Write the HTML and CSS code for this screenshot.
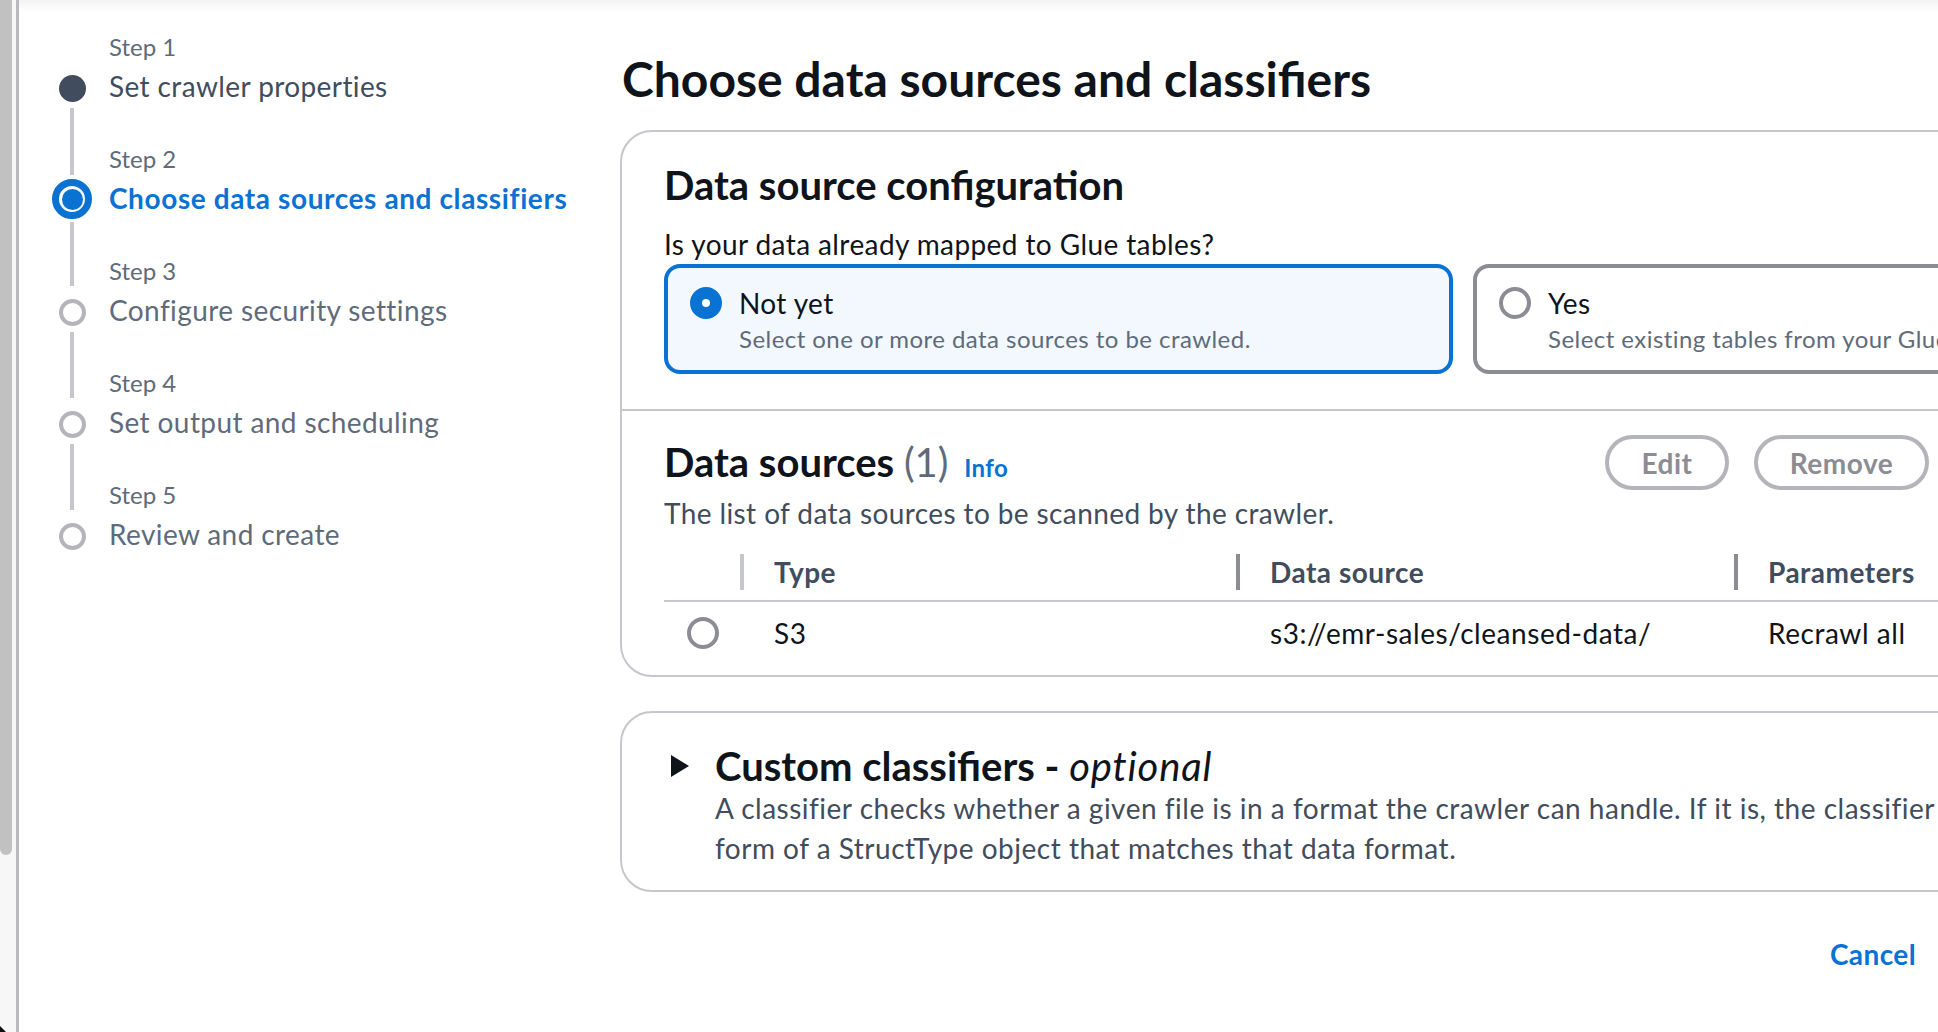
FILE: index.html
```html
<!DOCTYPE html>
<html lang="en">
<head>
<meta charset="utf-8">
<title>Add crawler - Choose data sources and classifiers</title>
<link rel="stylesheet" href="styles.css">
</head>
<body>
<div class="frame">
  <div class="scrolltrack">
    <div class="thumb"></div>
    <div class="corner"></div>
  </div>
  <div class="edge"></div>
  <div class="page">
    <nav class="steps">
      <ol class="step-list">
        <li class="step step-done step-first">
          <span class="seg seg-top"></span>
          <span class="step-label">Step 1</span>
          <span class="dot dot-done"></span>
          <span class="step-title">Set crawler properties</span>
          <span class="seg seg-bottom"></span>
        </li>
        <li class="step step-active">
          <span class="seg seg-top"></span>
          <span class="step-label">Step 2</span>
          <span class="dot dot-active"></span>
          <span class="step-title">Choose data sources and classifiers</span>
          <span class="seg seg-bottom"></span>
        </li>
        <li class="step">
          <span class="seg seg-top"></span>
          <span class="step-label">Step 3</span>
          <span class="dot dot-todo"></span>
          <span class="step-title">Configure security settings</span>
          <span class="seg seg-bottom"></span>
        </li>
        <li class="step">
          <span class="seg seg-top"></span>
          <span class="step-label">Step 4</span>
          <span class="dot dot-todo"></span>
          <span class="step-title">Set output and scheduling</span>
          <span class="seg seg-bottom"></span>
        </li>
        <li class="step step-last">
          <span class="seg seg-top"></span>
          <span class="step-label">Step 5</span>
          <span class="dot dot-todo"></span>
          <span class="step-title">Review and create</span>
          <span class="seg seg-bottom"></span>
        </li>
      </ol>
    </nav>

    <main class="content">
      <h1 class="page-title">Choose data sources and classifiers</h1>

      <section class="container">
        <div class="section section-config">
          <h2 class="h2">Data source configuration</h2>
          <p class="question">Is your data already mapped to Glue tables?</p>
          <div class="tiles">
            <label class="tile tile-selected">
              <span class="radio radio-on"></span>
              <span class="tile-text">
                <span class="tile-title">Not yet</span>
                <span class="tile-desc">Select one or more data sources to be crawled.</span>
              </span>
            </label>
            <label class="tile">
              <span class="radio"></span>
              <span class="tile-text">
                <span class="tile-title">Yes</span>
                <span class="tile-desc">Select existing tables from your Glue Data Catalog.</span>
              </span>
            </label>
          </div>
        </div>

        <div class="section section-sources">
          <div class="table-header">
            <h2 class="h2 h2-table">Data sources <span class="counter">(1)</span> <a class="info">Info</a></h2>
            <div class="actions">
              <button class="btn btn-disabled btn-edit">Edit</button>
              <button class="btn btn-disabled btn-remove">Remove</button>
              <button class="btn btn-add">Add a data source</button>
            </div>
          </div>
          <p class="desc">The list of data sources to be scanned by the crawler.</p>

          <div class="table">
            <div class="trow thead">
              <div class="th th-select"></div>
              <div class="th"><span class="sep sep-light"></span><span>Type</span></div>
              <div class="th"><span class="sep"></span><span>Data source</span></div>
              <div class="th"><span class="sep"></span><span>Parameters</span></div>
            </div>
            <div class="trow tbody">
              <div class="td td-select"><span class="radio"></span></div>
              <div class="td">S3</div>
              <div class="td">s3://emr-sales/cleansed-data/</div>
              <div class="td">Recrawl all</div>
            </div>
          </div>
        </div>
      </section>

      <section class="container container-exp">
        <div class="exp-header">
          <span class="caret">
            <svg width="20" height="22" viewBox="0 0 20 22"><path d="M1 0 L19 11 L1 22 Z" fill="#0f141a"/></svg>
          </span>
          <h2 class="h2">Custom classifiers - <i class="optional">optional</i></h2>
        </div>
        <p class="exp-desc">A classifier checks whether a given file is in a format the crawler can handle. If it is, the classifier creates a schema in the<br>form of a StructType object that matches that data format.</p>
      </section>

      <div class="form-actions">
        <a class="cancel">Cancel</a>
        <button class="btn btn-prev">Previous</button>
        <button class="btn btn-primary">Next</button>
      </div>
    </main>
  </div>
</div>
</body>
</html>
```

FILE: styles.css
```css
* {
  box-sizing: border-box;
  margin: 0;
  padding: 0;
}

html, body {
  overflow: hidden;
  background: #ffffff;
}

body {
  width: 1938px;
  height: 1032px;
  font-family: Lato, "Open Sans", sans-serif;
  color: #0f141a;
  letter-spacing: 0.4px;
}

.frame {
  display: flex;
  height: 1032px;
}

/* left window scrollbar */
.scrolltrack {
  width: 16px;
  flex: none;
  background: #f7f7f7;
  display: flex;
  flex-direction: column;
  justify-content: space-between;
}

.thumb {
  width: 12px;
  height: 855px;
  background: #c1c1c1;
  border-radius: 0 0 6px 6px;
}

.corner {
  width: 0;
  height: 0;
  border-left: 6px solid #111;
  border-top: 6px solid transparent;
}

.edge {
  width: 3px;
  flex: none;
  background: #b9b9c0;
}

.page {
  flex: none;
  width: 2287px;
  display: flex;
  background: linear-gradient(to bottom, #f3f3f3, #ffffff) top left / 100% 12px no-repeat, #ffffff;
}

/* ---------- wizard steps ---------- */
.steps {
  width: 601px;
  flex: none;
  padding: 28px 0 0 33px;
}

.step-list {
  list-style: none;
  display: flex;
  flex-direction: column;
}

.step {
  display: grid;
  grid-template-columns: 40px auto;
  grid-template-rows: 38px 40px 34px;
  column-gap: 17px;
}

.seg {
  grid-column: 1;
  justify-self: center;
  width: 4px;
  background: #c6c6cd;
}

.seg-top {
  grid-row: 1;
  margin-bottom: 4px;
}

.seg-bottom {
  grid-row: 3;
  margin-top: 2px;
}

.step-first .seg-top,
.step-last .seg-bottom {
  visibility: hidden;
}

.step-active .seg-top {
  margin-bottom: 3px;
}

.step-active .seg-bottom {
  margin-top: 4px;
}

.step-label {
  grid-column: 2;
  grid-row: 1;
  font-size: 24px;
  line-height: 38px;
  color: #5f6b7a;
  align-self: end;
  letter-spacing: 0;
}

.dot {
  grid-column: 1;
  grid-row: 2;
  justify-self: center;
  align-self: center;
  border-radius: 50%;
  margin-top: 4px;
}

.dot-done {
  width: 27px;
  height: 27px;
  background: #414d5c;
}

.dot-todo {
  width: 27px;
  height: 27px;
  border: 4px solid #b4b4bb;
  background: #ffffff;
}

.dot-active {
  width: 40px;
  height: 40px;
  border: 7px solid #0972d3;
  padding: 2.5px;
  background: #0972d3;
  background-clip: content-box;
  margin-top: 2px;
}

.step-title {
  grid-column: 2;
  grid-row: 2;
  font-size: 28px;
  line-height: 40px;
  color: #5f6b7a;
  white-space: nowrap;
}

.step-done .step-title {
  color: #414d5c;
}

.step-active .step-title {
  color: #0972d3;
  font-weight: 700;
  letter-spacing: 0.6px;
}

/* ---------- main content ---------- */
.content {
  width: 1686px;
  flex: none;
  padding-top: 51px;
}

.page-title {
  font-size: 48px;
  line-height: 56px;
  font-weight: 700;
  margin-left: 2px;
  margin-bottom: 23px;
  color: #0f141a;
  letter-spacing: 0;
}

.container {
  border: 2px solid #c6c6cd;
  border-radius: 32px;
  background: #ffffff;
}

.section {
  padding: 0 42px;
}

.section-config {
  padding-top: 31px;
  padding-bottom: 35px;
}

.section-sources {
  border-top: 2px solid #c6c6cd;
  padding-top: 24px;
}

.h2 {
  font-size: 40px;
  line-height: 44px;
  font-weight: 700;
  color: #0f141a;
  letter-spacing: 0;
}

.h2-table {
  margin-top: 5px;
}

.question {
  font-size: 28px;
  line-height: 40px;
  margin-top: 17px;
  color: #0f141a;
}

.tiles {
  display: grid;
  grid-template-columns: 1fr 1fr;
  gap: 20px;
  margin-top: 0;
}

.tile {
  display: flex;
  align-items: flex-start;
  gap: 17px;
  border: 4px solid #8c8c94;
  border-radius: 16px;
  padding: 15px 20px 15px 22px;
  background: #ffffff;
  white-space: nowrap;
  overflow: hidden;
}

.tile-selected {
  border-color: #0972d3;
  background: #f2f8fd;
}

.radio {
  flex: none;
  display: block;
  width: 32px;
  height: 32px;
  border-radius: 50%;
  border: 4px solid #8c8c94;
  background: #ffffff;
  margin-top: 4px;
}

.radio-on {
  border: 12px solid #0972d3;
}

.tile-text {
  display: flex;
  flex-direction: column;
}

.tile-title {
  font-size: 28px;
  line-height: 40px;
  color: #0f141a;
}

.tile-desc {
  font-size: 24px;
  line-height: 32px;
  color: #5f6b7a;
  letter-spacing: 0.45px;
}

/* data sources table */
.table-header {
  display: flex;
  justify-content: space-between;
  align-items: center;
  height: 55px;
}

.counter {
  font-weight: 400;
  color: #5f6b7a;
}

.info {
  font-size: 24px;
  font-weight: 700;
  color: #0972d3;
  margin-left: 6px;
  letter-spacing: 0.4px;
}

.actions {
  display: flex;
  gap: 25px;
}

.btn {
  font-family: inherit;
  font-size: 28px;
  font-weight: 700;
  letter-spacing: 0.5px;
  height: 55px;
  border-radius: 28px;
  border: 4px solid #0972d3;
  background: #ffffff;
  color: #0972d3;
  text-align: center;
}

.btn-disabled {
  border-color: #b4b4bb;
  color: #8c8c94;
}

.btn-edit {
  width: 124px;
}

.btn-remove {
  width: 175px;
}

.btn-add {
  width: 308px;
}

.desc {
  font-size: 28px;
  line-height: 40px;
  color: #414d5c;
  margin-top: 3px;
}

.table {
  margin-top: 11px;
}

.trow {
  display: grid;
  grid-template-columns: 76px 496px 498px 1fr;
}

.thead {
  border-bottom: 2px solid #c6c6cd;
}

.th {
  display: flex;
  align-items: center;
  gap: 30px;
  padding: 8px 0;
  font-size: 28px;
  line-height: 40px;
  font-weight: 700;
  color: #414d5c;
  letter-spacing: 0.5px;
}

.sep {
  width: 4px;
  height: 36px;
  background: #8c8c94;
}

.sep-light {
  background: #c6c6cd;
}

.td {
  padding: 11px 0 22px 34px;
  font-size: 28px;
  line-height: 40px;
  color: #0f141a;
  letter-spacing: 0.55px;
}

.td-select {
  padding-left: 23px;
}

/* expandable container */
.container-exp {
  margin-top: 34px;
  padding: 31px 42px 22px;
}

.exp-header {
  display: flex;
  align-items: center;
  gap: 19px;
}

.caret {
  width: 32px;
  height: 32px;
  display: flex;
  align-items: center;
  justify-content: center;
}

.optional {
  font-weight: 400;
  letter-spacing: 0.8px;
}

.exp-desc {
  padding-left: 51px;
  font-size: 28px;
  line-height: 40px;
  color: #414d5c;
  white-space: nowrap;
  letter-spacing: 0.5px;
}

.form-actions {
  display: flex;
  justify-content: flex-end;
  align-items: center;
  margin-top: 34px;
}

.cancel {
  font-size: 28px;
  line-height: 40px;
  font-weight: 700;
  color: #0972d3;
  margin-right: 32px;
}

.btn-prev {
  width: 180px;
  margin-right: 16px;
}

.btn-primary {
  width: 162px;
  background: #ff9900;
  border-color: #ff9900;
  color: #0f141a;
}
```
